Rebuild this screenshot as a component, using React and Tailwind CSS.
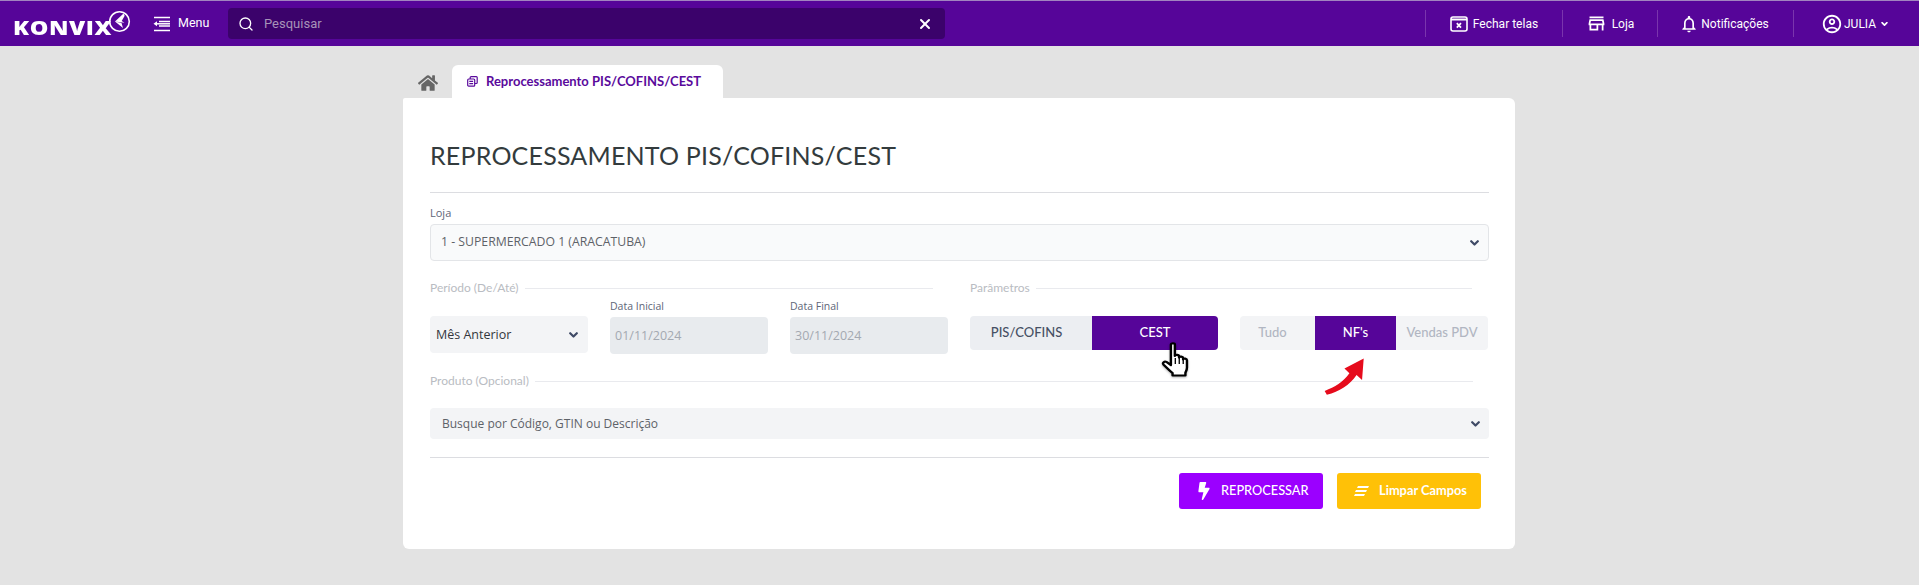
import React from "react";
import { Search, X } from "lucide-react";
import { FaHome, FaBolt } from "react-icons/fa";
import { MdOutlineStore, MdOutlineNotifications, MdOutlineAccountCircle } from "react-icons/md";

const Chevron = ({ cls = "text-[#3f4a66]" }) => (
  <svg width="9" height="6" viewBox="0 0 9 6" fill="none" className={cls}>
    <path d="M1.2 1.2 4.5 4.5l3.3-3.3" stroke="currentColor" strokeWidth="2.2" strokeLinecap="round" strokeLinejoin="round" />
  </svg>
);

const MenuIcon = () => (
  <svg width="18" height="16" viewBox="0 0 18 16" fill="none" stroke="white" strokeWidth="1.5">
    <path d="M1 1.5h16M6 5.5h11M6 10h11M1 14.5h16" />
    <path d="M0.5 7.8 4 5.3v5z" fill="white" stroke="none" />
    <path d="M3 7.8h14" />
  </svg>
);

const Logo = () => (
  <div className="relative w-[119px] h-[46px] ml-[13px] shrink-0">
    <span className="absolute left-0 top-[16px] text-[20px] leading-[22px] font-extrabold text-white tracking-[0.5px] origin-left scale-x-[1.17] font-['Open_Sans',sans-serif]">
      KONVIX
    </span>
    <svg width="23" height="23" viewBox="0 0 23 23" fill="none" className="absolute left-[95px] top-[9px]">
      <circle cx="11.5" cy="11.5" r="9.8" stroke="white" strokeWidth="1.6" />
      <path d="M15.5 3.5 7 11.5l9.5 1.2-2.8-1.8 3-5.2z M7 11.5l8 6.5-1.5-5z" fill="white" />
    </svg>
  </div>
);

const FecharIcon = () => (
  <svg width="18" height="16" viewBox="0 0 18 16" fill="none">
    <rect x="1" y="1" width="16" height="14" rx="2" stroke="white" strokeWidth="1.6" />
    <path d="M1 2.5h16v2H1z" fill="white" />
    <path d="M6.8 7.2l4.2 4.4M11 7.2l-4.2 4.4" stroke="white" strokeWidth="1.7" />
  </svg>
);

const CopyIcon = () => (
  <svg width="11" height="11" viewBox="0 0 11 11" fill="none" stroke="#5a0a9c" strokeWidth="1.2">
    <rect x="0.7" y="3" width="7" height="7.2" rx="1" />
    <path d="M3.2 3V1.6c0-.5.4-.9.9-.9h5.2c.5 0 .9.4.9.9v5c0 .5-.4.9-.9.9H7.7" />
    <path d="M2.3 5.3h3.8M2.3 7.6h3.8" />
  </svg>
);

const LinesIcon = () => (
  <svg width="15" height="10" viewBox="0 0 15 10" fill="white">
    <path d="M4 0h11l-1 2H3zM2 4h11l-1 2H1zM1 8h10l-1 2H0z" />
  </svg>
);

const Hand = () => (
  <svg width="33" height="40" viewBox="0 0 30 40" preserveAspectRatio="none" className="absolute left-0 top-0 drop-shadow-[0_1px_1px_rgba(0,0,0,0.3)]">
    <path
      d="M9 3.5c0-1.6 3.6-1.6 3.6 0V15c.4-1.6 3.8-1.4 3.8.4v1.2c.4-1.5 3.6-1.3 3.7.5v1.3c.6-1.4 3.4-1 3.5 1v7c0 2.4-.8 3.7-1.4 5.3v2.8H10.5v-2.4C8.8 30.5 5 26.5 2.4 23.7c-1.6-1.9.8-3.9 2.5-2.8L9 24z"
      fill="white"
      stroke="black"
      strokeWidth="2.2"
      strokeLinejoin="round"
    />
    <path d="M13 17v6M16.6 17v6M20.2 18.5V23" stroke="black" strokeWidth="1.2" />
  </svg>
);

const Arrow = () => (
  <svg width="44" height="40" viewBox="0 0 40 36" className="absolute left-0 top-0">
    <path d="M1.5 32.5C11 29 18 24.5 24 16.5l-4.5-4.5L37 3l-1.5 19.5-5-4.5C24 27.5 15 33 3.5 36z" fill="#e60b1c" />
  </svg>
);

const Divider = () => <div className="w-px h-[27px] bg-[#7a35ad] shrink-0" />;

const NavItem = ({ w, gap, icon, children }) => (
  <div className={`flex items-center justify-center shrink-0 text-[12px] text-white ${w} ${gap}`}>
    {icon}
    <span>{children}</span>
  </div>
);

const Legend = ({ children }) => (
  <div className="flex items-center gap-[6px] h-[14px] text-[12px] text-[#b9bcc2] font-['Lato',sans-serif]">
    <span className="whitespace-nowrap">{children}</span>
    <div className="flex-1 h-px bg-[#e9eaee]" />
  </div>
);

const DateField = ({ label, value }) => (
  <div className="w-[158px] flex flex-col gap-[4px]">
    <label className="text-[10.5px] leading-[14px] text-[#5e6678] font-['Open_Sans',sans-serif]">{label}</label>
    <div className="h-[37px] rounded-[4px] bg-[#e8ebee] flex items-center px-[5px] pt-[1px] text-[12.5px] text-[#a4a9b1] font-['Open_Sans',sans-serif]">
      {value}
    </div>
  </div>
);

export default function App() {
  return (
    <div className="min-h-[585px] bg-[#e3e3e3] font-['Roboto',sans-serif]">
      <header className="h-[46px] bg-[#560599] border-t border-[#a184c0] flex items-center">
        <Logo />
        <div className="flex items-center gap-[7px] ml-[21px] w-[75px] shrink-0 text-[12.5px] text-white">
          <MenuIcon />
          <span>Menu</span>
        </div>
        <div className="w-[717px] h-[31px] rounded-[4px] bg-[#3b026b] flex items-center pl-[10px] pr-[12px] shrink-0">
          <Search size={16} className="text-white" strokeWidth={2} />
          <span className="ml-[10px] flex-1 text-[13px] text-[#a793b8]">Pesquisar</span>
          <X size={16} className="text-white" strokeWidth={3} />
        </div>
        <div className="ml-auto flex items-center">
          <Divider />
          <NavItem w="w-[136px]" gap="gap-[5px]" icon={<FecharIcon />}>Fechar telas</NavItem>
          <Divider />
          <NavItem w="w-[94px]" gap="gap-[5px]" icon={<MdOutlineStore size={21} className="text-white" />}>Loja</NavItem>
          <Divider />
          <NavItem w="w-[135px] pr-[3px]" gap="gap-[2px]" icon={<MdOutlineNotifications size={20} className="text-white" />}>Notificações</NavItem>
          <Divider />
          <div className="w-[125px] shrink-0 flex items-center pl-[27px] gap-[1px] text-[12px] text-white">
            <MdOutlineAccountCircle size={22} />
            <span>JULIA</span>
            <Chevron cls="text-white ml-[3px] scale-75" />
          </div>
        </div>
      </header>

      <main className="w-[1112px] ml-[403px] pt-[19px]">
        <div className="flex items-end h-[33px] pl-[15px]">
          <FaHome size={20} className="text-[#666666] mb-[5px]" />
          <div className="ml-[14px] w-[271px] h-[33px] bg-white rounded-t-[6px] flex items-center gap-[8px] pl-[15px] text-[13px] font-bold text-[#5a0a9c] font-['Lato',sans-serif]">
            <CopyIcon />
            <span>Reprocessamento PIS/COFINS/CEST</span>
          </div>
        </div>

        <section className="h-[451px] bg-white rounded-b-[6px] rounded-tr-[6px] rounded-tl-[2px] pl-[27px] pr-[26px] pt-[42px]">
          <h1 className="text-[25px] leading-[30px] text-[#333b3d] font-['Lato',sans-serif] tracking-[0.2px]">REPROCESSAMENTO PIS/COFINS/CEST</h1>
          <div className="h-px bg-[#dcdde1] mt-[22px]" />

          <label className="block mt-[13px] text-[11px] leading-[14px] text-[#5e6678] font-['Open_Sans',sans-serif]">Loja</label>
          <div className="mt-[4px] h-[37px] rounded-[4px] bg-[#f9fafb] border border-[#e3e5e8] flex items-center justify-between pl-[10px] pr-[9px] text-[12.25px] text-[#5e6268] font-['Open_Sans',sans-serif]">
            <span>1 - SUPERMERCADO 1 (ARACATUBA)</span>
            <Chevron />
          </div>

          <div className="flex mt-[20px]">
            <div className="w-[518px] shrink-0">
              <div className="w-[503px]"><Legend>Período (De/Até)</Legend></div>
              <div className="flex items-end gap-[22px] mt-[4px]">
                <div className="w-[158px] h-[37px] rounded-[4px] bg-[#f3f4f6] flex items-center justify-between pl-[6px] pr-[10px] pt-[1px] text-[12.5px] text-[#33373c] font-['Open_Sans',sans-serif] mb-[1px]">
                  <span>Mês Anterior</span>
                  <Chevron />
                </div>
                <DateField label="Data Inicial" value="01/11/2024" />
                <DateField label="Data Final" value="30/11/2024" />
              </div>
            </div>
            <div className="ml-[22px] w-[519px]">
              <div className="w-[502px]"><Legend>Parâmetros</Legend></div>
              <div className="flex mt-[21px]">
                <div className="w-[248px] h-[34px] rounded-[4px] bg-[#eceef2] flex overflow-hidden text-[13px] font-['Lato',sans-serif]">
                  <div className="w-[122px] flex items-center justify-center text-[#465064] font-medium pr-[9px]">PIS/COFINS</div>
                  <div className="flex-1 bg-[#560599] flex items-center justify-center text-white font-medium pb-[1px]">CEST</div>
                </div>
                <div className="ml-[22px] w-[248px] h-[34px] rounded-[4px] bg-[#f3f4f6] flex overflow-hidden text-[13px] font-['Lato',sans-serif]">
                  <div className="w-[75px] flex items-center justify-center text-[#b1b6c2] font-medium pr-[10px]">Tudo</div>
                  <div className="w-[81px] bg-[#560599] flex items-center justify-center text-white font-medium">NF's</div>
                  <div className="flex-1 flex items-center justify-center text-[#b1b6c2] font-medium whitespace-nowrap">Vendas PDV</div>
                </div>
              </div>
              <div className="relative h-0">
                <div className="absolute left-[191px] top-[-9px] w-[33px] h-[40px]"><Hand /></div>
                <div className="absolute left-[353px] top-[5px] w-[44px] h-[40px]"><Arrow /></div>
              </div>
            </div>
          </div>

          <div className="mt-[20px] w-[1043px]"><Legend>Produto (Opcional)</Legend></div>
          <div className="mt-[20px] h-[31px] rounded-[4px] bg-[#f3f4f6] flex items-center justify-between pl-[12px] pr-[9px] text-[12px] text-[#5e6268] font-['Open_Sans',sans-serif]">
            <span>Busque por Código, GTIN ou Descrição</span>
            <Chevron />
          </div>
          <div className="h-px bg-[#dcdde1] mt-[18px]" />

          <div className="flex justify-end gap-[14px] mt-[15px] pr-[8px]">
            <button className="w-[144px] h-[36px] rounded-[3px] bg-[#9b00ff] flex items-center pl-[16px] gap-[8px] text-[12.75px] font-medium text-white font-['Lato',sans-serif]">
              <FaBolt size={18} />
              <span>REPROCESSAR</span>
            </button>
            <button className="w-[144px] h-[36px] rounded-[3px] bg-[#ffc107] flex items-center pl-[17px] gap-[10px] text-[12.8px] font-bold text-white font-['Lato',sans-serif]">
              <LinesIcon />
              <span>Limpar Campos</span>
            </button>
          </div>
        </section>
      </main>
    </div>
  );
}
